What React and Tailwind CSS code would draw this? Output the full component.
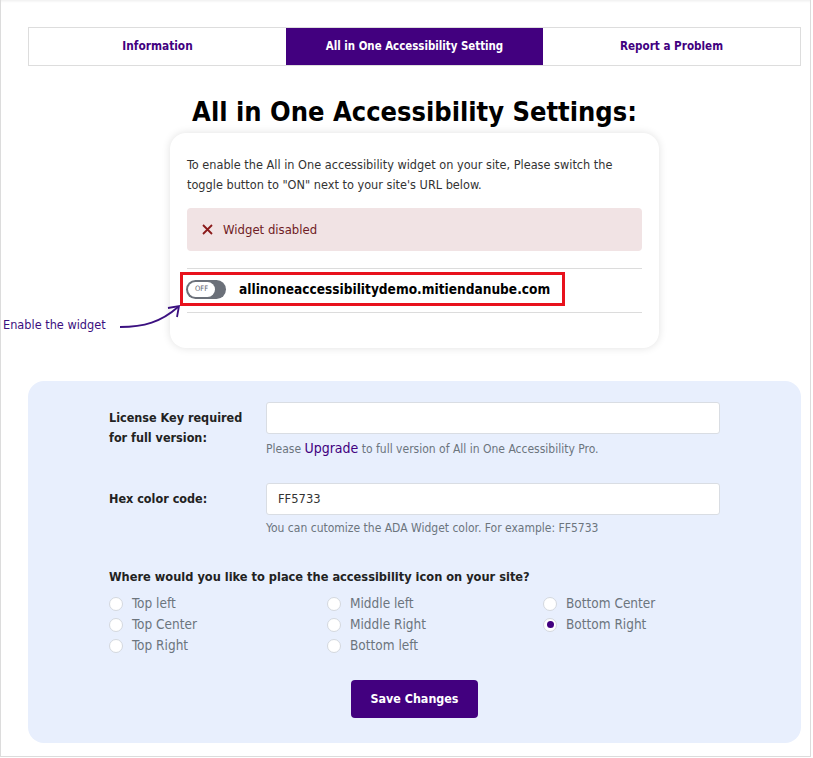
import React from "react";

const F = { fontFamily: '"DejaVu Sans Condensed", Lato, sans-serif' };

function Radio({ label, checked }) {
  return (
    <label className="flex items-center h-[21px] text-[13.5px] text-[#6c757d]">
      <span className="w-[14px] h-[14px] rounded-full border border-[#d4d8de] bg-white flex items-center justify-center mr-[9px]">
        {checked && <span className="w-[7px] h-[7px] rounded-full bg-[#42007f]"></span>}
      </span>
      {label}
    </label>
  );
}

export default function App() {
  return (
    <div className="bg-white w-[813px] h-[758px]" style={F}>
      <div className="relative w-[811px] h-[757px] border-x border-b border-[#dcdcdc] shadow-[inset_0_3px_3px_-2px_rgba(0,0,0,0.08)]">
        <div className="pt-[27px] pl-[27px] pr-[9px]">
          <div className="grid grid-cols-3 h-[39px] border border-[#dddddd]">
            <div className="flex items-center justify-center text-[11.8px] font-bold text-[#42007f]">Information</div>
            <div className="flex items-center justify-center text-[11.4px] font-bold text-white bg-[#42007f]">All in One Accessibility Setting</div>
            <div className="flex items-center justify-center text-[11.6px] font-bold text-[#42007f]">Report a Problem</div>
          </div>
        </div>

        <div className="pl-[27px] pr-[9px]">
          <h1 className="text-center text-[27px] font-bold text-black leading-[36px] mt-[28px]">All in One Accessibility Settings:</h1>

          <div className="relative mx-auto mt-[3px] w-[489px] h-[215px] rounded-[16px] bg-white shadow-[0_0_8px_rgba(0,0,0,0.12)] px-[17px] pt-[22px]">
            <p className="text-[12.6px] leading-[20px] text-[#333333]">
              To enable the All in One accessibility widget on your site, Please switch the toggle button to "ON" next to your site's URL below.
            </p>
            <div className="mt-[13px] h-[43px] rounded-[4px] bg-[#f1e3e4] flex items-center pl-[15px] text-[13px] text-[#6f1c24]">
              <svg width="11" height="11" viewBox="0 0 11 11" className="mr-[10px]">
                <path d="M1 1 L10 10 M10 1 L1 10" stroke="#8b1a1a" strokeWidth="1.8" />
              </svg>
              Widget disabled
            </div>
            <div className="mt-[17px] border-t border-[#dcdcdc]"></div>
            <div className="relative h-[43px]">
              <div className="absolute left-[-7px] top-[3px] w-[385px] h-[34px] border-[3px] border-[#e8121c] flex items-center pl-[3px]">
                <div className="w-[40px] h-[19px] rounded-full bg-[#6b7079] flex items-center p-[2px]">
                  <div className="w-[27px] h-[15px] rounded-full bg-white flex items-center justify-center text-[7.5px] text-[#5f6670] font-normal">OFF</div>
                </div>
                <span className="ml-[13px] text-[13.6px] font-bold text-black">allinoneaccessibilitydemo.mitiendanube.com</span>
              </div>
            </div>
            <div className="border-t border-[#dcdcdc]"></div>
          </div>
        </div>

        <div className="absolute left-[2px] top-[302px] flex items-end">
          <span className="text-[12.6px] text-[#3b1080] leading-none mb-[0px]">Enable the widget</span>
          <svg width="70" height="30" viewBox="0 0 70 30" className="ml-[10px]">
            <path d="M4 25 C 28 25, 45 20, 62 5" stroke="#3b1080" strokeWidth="1.8" fill="none" />
            <path d="M52 6 L63 4 L61 15" stroke="#3b1080" strokeWidth="1.8" fill="none" />
          </svg>
        </div>

        <div className="ml-[27px] mr-[9px] mt-[33px] h-[362px] rounded-[16px] bg-[#e8effd] px-[81px] pt-[21px]">
          <div className="flex">
            <div className="w-[157px] text-[12.5px] font-bold text-[#222222] leading-[20px] pt-[6px]">License Key required<br />for full version:</div>
            <div className="flex-1">
              <div className="h-[32px] bg-white border border-[#d9dde3] rounded-[3px]"></div>
              <div className="mt-[5px] text-[12px] text-[#6c757d] leading-[18px]">
                Please <span className="text-[14px] text-[#42007f]">Upgrade</span> to full version of All in One Accessibility Pro.
              </div>
            </div>
          </div>
          <div className="flex mt-[25px]">
            <div className="w-[157px] text-[12.5px] font-bold text-[#222222] leading-[32px]">Hex color code:</div>
            <div className="flex-1">
              <div className="h-[32px] bg-white border border-[#d9dde3] rounded-[3px] flex items-center pl-[11px] text-[12.8px] text-[#333333]">FF5733</div>
              <div className="mt-[4px] text-[12px] text-[#6c757d] leading-[18px]">You can cutomize the ADA Widget color. For example: FF5733</div>
            </div>
          </div>
          <div className="mt-[30px] text-[12.7px] font-bold text-[#222222] leading-[20px]">Where would you like to place the accessibility icon on your site?</div>
          <div className="grid grid-cols-[218px_216px_1fr] mt-[6px]">
            <div>
              <Radio label="Top left" />
              <Radio label="Top Center" />
              <Radio label="Top Right" />
            </div>
            <div>
              <Radio label="Middle left" />
              <Radio label="Middle Right" />
              <Radio label="Bottom left" />
            </div>
            <div>
              <Radio label="Bottom Center" />
              <Radio label="Bottom Right" checked />
            </div>
          </div>
          <div className="flex justify-center mt-[24px]">
            <button className="w-[127px] h-[38px] rounded-[4px] bg-[#42007f] text-white text-[12.4px] font-bold">Save Changes</button>
          </div>
        </div>
      </div>
    </div>
  );
}
